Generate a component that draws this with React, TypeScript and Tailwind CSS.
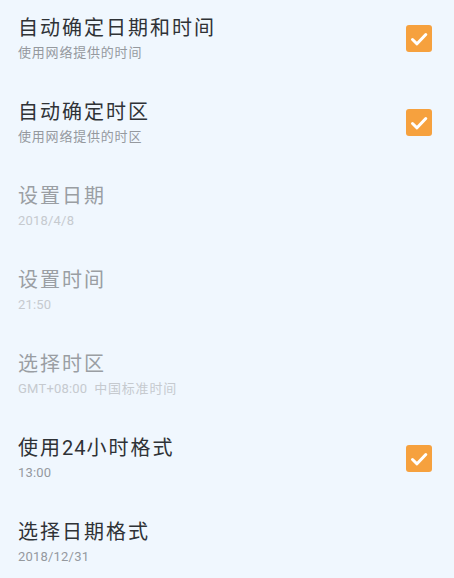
import React from "react";

type Row = { title: string; sub: string; disabled?: boolean; checked?: boolean };

const rows: Row[] = [
  { title: "自动确定日期和时间", sub: "使用网络提供的时间", checked: true },
  { title: "自动确定时区", sub: "使用网络提供的时区", checked: true },
  { title: "设置日期", sub: "2018/4/8", disabled: true },
  { title: "设置时间", sub: "21:50", disabled: true },
  { title: "选择时区", sub: "GMT+08:00  中国标准时间", disabled: true },
  { title: "使用24小时格式", sub: "13:00", checked: true },
  { title: "选择日期格式", sub: "2018/12/31" },
];

function Check() {
  return (
    <div className="w-[26px] h-[27px] rounded-[3px] bg-[#f6a13e] flex items-center justify-center">
      <svg width="20" height="20" viewBox="0 0 20 20" fill="none">
        <path d="M3.5 10.5 L8 14.8 L16.8 5.5" stroke="white" strokeWidth="3" strokeLinecap="round" strokeLinejoin="round" />
      </svg>
    </div>
  );
}

function Mixed({ text, cjkClass, latinClass }: { text: string; cjkClass: string; latinClass: string }) {
  const parts = text.match(/[\u4e00-\u9fff]+|[^\u4e00-\u9fff]+/g) || [];
  return (
    <>
      {parts.map((p, i) =>
        /[\u4e00-\u9fff]/.test(p) ? (
          <span key={i} className={cjkClass}>{p}</span>
        ) : (
          <span key={i} className={latinClass}>{p}</span>
        )
      )}
    </>
  );
}

export default function App() {
  return (
    <div
      className="w-[454px] h-[578px] bg-[#f0f7fe] overflow-hidden"
      style={{ fontFamily: 'Roboto, "Noto Sans CJK SC", sans-serif' }}
    >
      {rows.map((r, i) => (
        <div key={i} className="h-[84px] flex items-start pl-[18px] pr-[22px] pt-[14px]">
          <div className="flex-1">
            <div
              className={`text-[20px] leading-[28px] whitespace-pre ${r.disabled ? "text-[#9a9ea3]" : "text-[#2f3236]"}`}
            >
              <Mixed text={r.title} cjkClass="tracking-[2px]" latinClass="tracking-[1px]" />
            </div>
            <div
              className={`mt-[3px] text-[13px] leading-[16px] whitespace-pre ${r.disabled ? "text-[#c6cacf]" : "text-[#95999e]"}`}
            >
              <Mixed text={r.sub} cjkClass="tracking-[0.8px]" latinClass="tracking-[0.2px]" />
            </div>
          </div>
          {r.checked && (
            <div className="mt-[11px]">
              <Check />
            </div>
          )}
        </div>
      ))}
    </div>
  );
}
